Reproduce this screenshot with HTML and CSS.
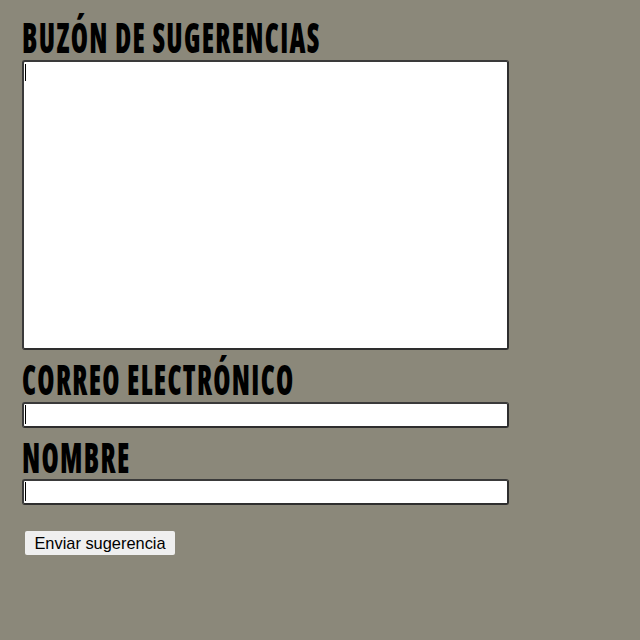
FILE: index.html
```html
<!DOCTYPE html>
<html lang="es">
<head>
<meta charset="utf-8">
<title>Buzón de sugerencias</title>
<link rel="stylesheet" href="styles.css">
</head>
<body>
<form class="form">
  <h2 class="label first"><span class="label-text">BUZÓN DE SUGERENCIAS</span></h2>
  <textarea class="field area"></textarea>
  <h2 class="label"><span class="label-text">CORREO ELECTRÓNICO</span></h2>
  <input class="field line" type="text">
  <h2 class="label tight"><span class="label-text">NOMBRE</span></h2>
  <input class="field line" type="text">
  <button class="submit" type="button">Enviar sugerencia</button>
</form>
</body>
</html>
```
FILE: styles.css
```css
html, body {
  margin: 0;
  padding: 0;
  background: #8b887a;
}
.form {
  padding: 0 0 0 22px;
  display: flex;
  flex-direction: column;
  align-items: flex-start;
}
.label {
  margin: 9px 0 3px;
  font-family: "Open Sans", sans-serif;
  font-weight: 800;
  font-stretch: 75%;
  font-size: 42px;
  letter-spacing: 2px;
  line-height: 40px;
  height: 40px;
  color: #000;
  white-space: nowrap;
}
.label.first {
  margin-top: 17px;
}
.label.tight {
  margin-bottom: 2px;
}
.label-text {
  display: inline-block;
  transform: scaleX(0.66);
  transform-origin: 0 50%;
}
.field {
  box-sizing: border-box;
  width: 487px;
  margin: 0;
  padding: 0;
  border: 2px solid #2e2e2e;
  border-top-color: #3a3a3a;
  border-left-color: #3a3a3a;
  border-radius: 3px;
  background: #fff linear-gradient(#000, #000) no-repeat;
  outline: none;
  font: 16px "Liberation Sans", sans-serif;
}
.area {
  display: block;
  height: 290px;
  resize: none;
  background-position: 1px 2px;
  background-size: 1px 17px;
}
.line {
  height: 26px;
  background-position: 1px 1px;
  background-size: 1px 19px;
}
.submit {
  margin: 26px 0 0 3px;
  width: 150px;
  height: 24px;
  padding: 0;
  border: none;
  border-radius: 2px;
  background: #efefef;
  color: #000;
  font: 16.4px "Liberation Sans", Arial, sans-serif;
}
```
